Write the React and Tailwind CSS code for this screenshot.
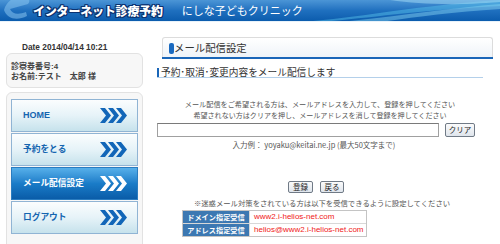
import React from "react";

function Chevrons({ color }) {
  const pts = (x) =>
    `${x},0 ${x + 5},0 ${x + 11},7.5 ${x + 5},15 ${x},15 ${x + 6},7.5`;
  return (
    <svg width="27" height="15" viewBox="0 0 27 15">
      {[0, 8, 16].map((x) => (
        <polygon key={x} points={pts(x)} fill={color} />
      ))}
    </svg>
  );
}

function NavButton({ label, active, latin }) {
  return (
    <div
      className={
        "h-[33px] flex items-center justify-between pl-[11px] pr-[10px] border " +
        (active
          ? "border-[#2a7cc0] bg-gradient-to-b from-[#56b0ea] via-[#1a7cc8] to-[#0a5ca8]"
          : "border-[#90b4d4] bg-gradient-to-b from-[#fbfdfe] via-[#e6f3f8] to-[#c6e2ec]")
      }
    >
      <span
        className={
          "font-bold leading-none " +
          (latin ? "text-[9px] " : "text-[8.7px] ") +
          (active ? "text-white" : "text-[#1565b0]")
        }
      >
        {label}
      </span>
      <Chevrons color={active ? "#ffffff" : "#1266b8"} />
    </div>
  );
}

export default function App() {
  const outline =
    "[text-shadow:1px_0_#0b3270,-1px_0_#0b3270,0_1px_#0b3270,0_-1px_#0b3270,1px_1px_#0b3270,-1px_-1px_#0b3270,1px_-1px_#0b3270,-1px_1px_#0b3270]";
  return (
    <div className="w-[500px] h-[244px] overflow-hidden bg-white font-['Liberation_Sans','Noto_Sans_CJK_JP',sans-serif] text-[#333]">
      <header className="relative h-[22px] overflow-hidden bg-gradient-to-b from-[#4b95d6] via-[#1f70bf] to-[#0b5cad] border-b border-[#e8f2fa] flex items-center">
        <svg className="absolute left-0 top-0" width="34" height="22" viewBox="0 0 34 22">
          <path
            d="M4,10 C6,2 14,-4 22,-4 C29,-4 31,1 28,4 L10,9 C12,14 18,15 26,12 L27,16 C17,21 7,19 4,10 Z"
            fill="#86c2ee"
            opacity="0.55"
          />
        </svg>
        <svg
          className="absolute right-0 top-0"
          width="200"
          height="22"
          viewBox="0 0 200 22"
        >
          <path d="M0,22 C60,18 110,6 200,0 L200,6 C120,10 70,18 20,22 Z" fill="#5cc6ee" opacity="0.45" />
          <path d="M40,22 C100,16 150,8 200,4 L200,9 C150,12 110,18 80,22 Z" fill="#8ad8f4" opacity="0.45" />
          <path d="M90,0 C120,4 150,6 200,2 L200,0 Z" fill="#a6dcf6" opacity="0.5" />
        </svg>
        <span
          className={
            "relative ml-[33px] text-[12px] font-black text-white leading-none tracking-[-0.2px] font-['Noto_Sans_CJK_JP',sans-serif] " +
            outline
          }
        >
          インターネット診療予約
        </span>
        <span className="relative ml-[19px] text-[11px] text-white leading-none font-['Noto_Sans_CJK_JP',sans-serif]">
          にしな子どもクリニック
        </span>
      </header>

      <div className="flex">
        <aside className="w-[157px] shrink-0 pl-[6px] pr-[14px]">
          <div className="mt-[20px] pl-[16px] text-[8.3px] font-bold leading-[10px] text-[#333]">
            Date 2014/04/14 10:21
          </div>
          <div className="mt-[1px] h-[35px] rounded-[6px] border border-[#e2e2e2] bg-[#f7f7f7] pl-[4px] pt-[8px] text-[8px] font-bold leading-[10px] text-[#444]">
            <div>診察券番号:4</div>
            <div>お名前:テスト　太郎 様</div>
          </div>
          <div className="mt-[4px] h-[160px] rounded-[6px] border border-[#e2e2e2] bg-[#f7f7f7] px-[4px] pt-[6px] flex flex-col gap-[1px]">
            <NavButton label="HOME" latin />
            <NavButton label="予約をとる" />
            <NavButton label="メール配信設定" active />
            <NavButton label="ログアウト" />
          </div>
        </aside>

        <main className="w-[336px] shrink-0">
          <div className="mt-[15px] ml-[5px] w-[331px] h-[21px] rounded-t-[3px] border border-[#dcdcdc] border-b-0 bg-gradient-to-b from-white to-[#eef3f8] flex items-center relative">
            <span className="ml-[6px] w-[5px] h-[11px] rounded-[2px] bg-[#1a6ac0]" />
            <span className="text-[10.4px] text-[#333] leading-none font-['Noto_Sans_CJK_JP',sans-serif]">
              メール配信設定
            </span>
            <span className="absolute left-[-1px] right-[-1px] bottom-[-1px] h-[2px] bg-[#1a66b8]" />
          </div>

          <div className="mt-[10px] w-[326px] h-[10px] border-b border-[#b4d0ea] flex items-center">
            <span className="w-[2px] h-[9px] bg-[#1a66b8]" />
            <span className="ml-[2px] text-[9.7px] leading-none text-[#333] font-['Noto_Sans_CJK_JP',sans-serif]">
              予約･取消･変更内容をメール配信します
            </span>
          </div>

          <div className="w-[326px] text-[#555] font-['Noto_Sans_CJK_JP',sans-serif]">
            <p className="mt-[21px] text-center text-[7.15px] leading-[11px]">
              メール配信をご希望される方は、メールアドレスを入力して、登録を押してください
            </p>
            <p className="text-center text-[7.05px] leading-[11px]">
              希望されない方はクリアを押し、メールアドレスを消して登録を押してください
            </p>
            <div className="mt-[2px] flex items-center">
              <div className="w-[282px] h-[14px] border border-[#a0a0a0] border-t-[#7a7a7a] bg-white" />
              <div className="ml-[6px] w-[30px] h-[14px] rounded-[2px] border border-[#707a86] bg-gradient-to-b from-[#fbfbfb] to-[#dfe5ec] flex items-center justify-center text-[7.5px] text-[#222] leading-none">
                クリア
              </div>
            </div>
            <p className="mt-[2px] pr-[12px] text-center text-[7.5px] leading-[12px] text-[#555]">
              入力例： yoyaku@keitai.ne.jp (最大50文字まで)
            </p>
            <div className="mt-[30px] pr-[8px] flex justify-center gap-[7px]">
              <div className="w-[25px] h-[12px] rounded-[2px] border border-[#707a86] bg-gradient-to-b from-[#fbfbfb] to-[#dfe5ec] flex items-center justify-center text-[7.5px] text-[#222] leading-none">
                登録
              </div>
              <div className="w-[24px] h-[12px] rounded-[2px] border border-[#707a86] bg-gradient-to-b from-[#fbfbfb] to-[#dfe5ec] flex items-center justify-center text-[7.5px] text-[#222] leading-none">
                戻る
              </div>
            </div>
            <p className="mt-[4px] pl-[4px] text-center text-[7.35px] leading-[11px]">
              ※迷惑メール対策をされている方は以下を受信できるように設定してください
            </p>
            <div className="mt-[2px] ml-[25px] w-[185px] border border-[#c4c4c4] grid grid-cols-[66px_1fr] gap-[1px] bg-[#d8d8d8]">
              <div className="h-[12px] bg-[#3c78b2] text-white font-bold text-[7.2px] leading-[12px] text-center">
                ドメイン指定受信
              </div>
              <div className="h-[12px] bg-white text-[#f02020] text-[8px] leading-[12px] pl-[4px] font-['Liberation_Sans',sans-serif]">
                www2.i-helios-net.com
              </div>
              <div className="h-[12px] bg-[#3c78b2] text-white font-bold text-[7.2px] leading-[12px] text-center">
                アドレス指定受信
              </div>
              <div className="h-[12px] bg-white text-[#f02020] text-[8px] leading-[12px] pl-[4px] font-['Liberation_Sans',sans-serif]">
                helios@www2.i-helios-net.com
              </div>
            </div>
          </div>
        </main>
      </div>
    </div>
  );
}
